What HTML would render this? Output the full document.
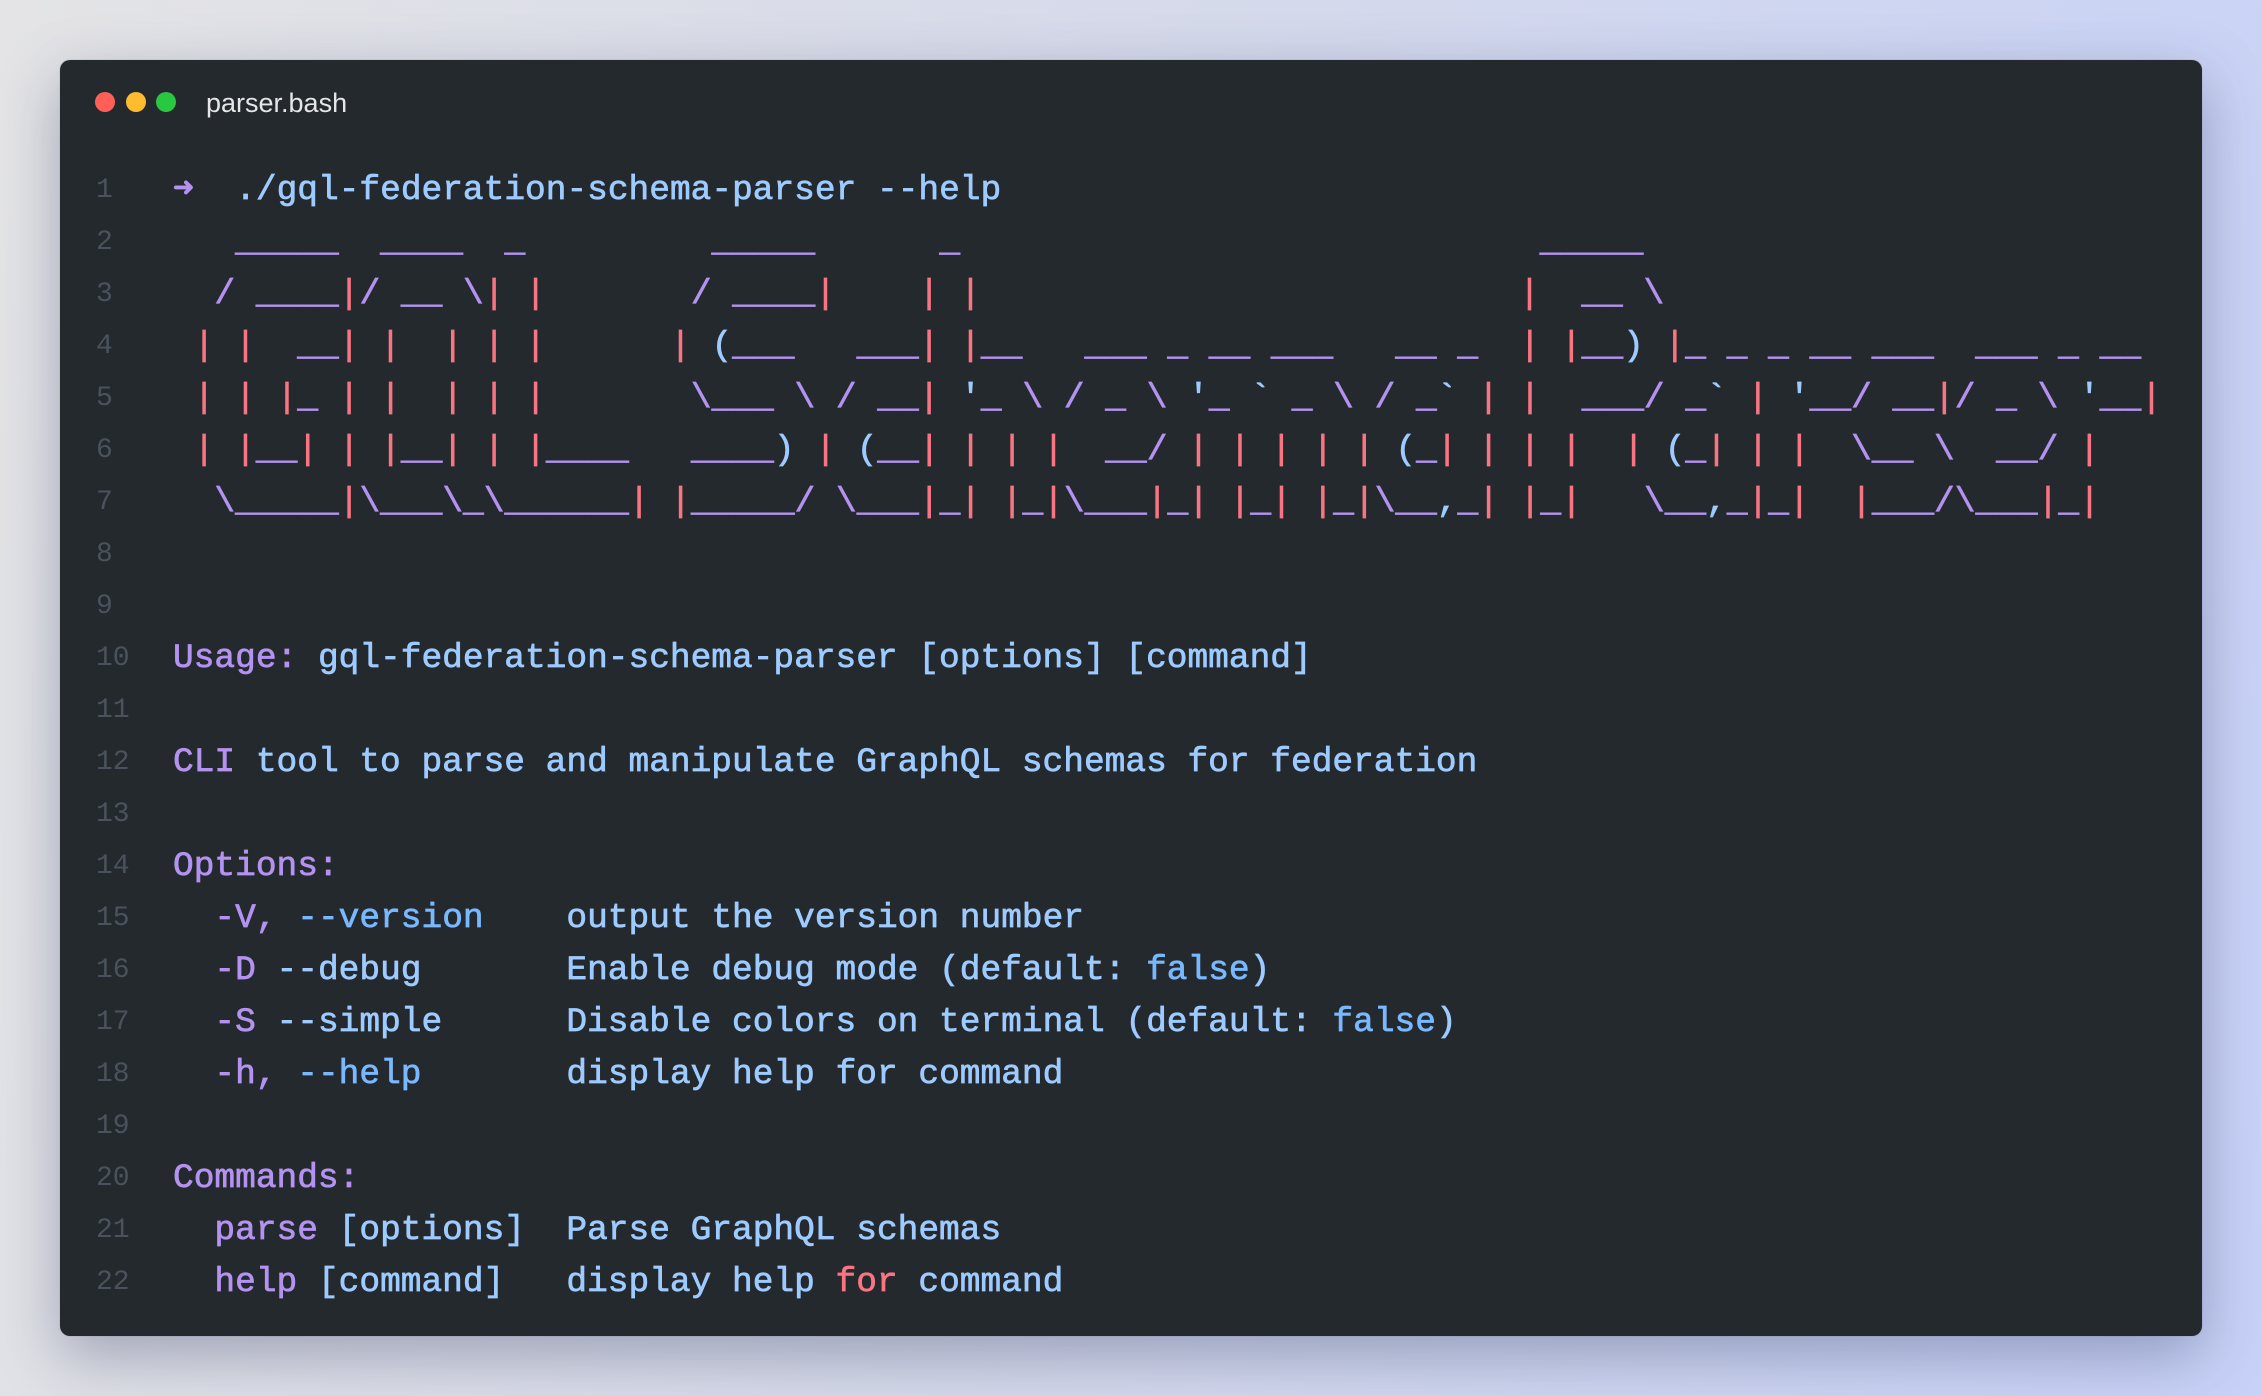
<!DOCTYPE html>
<html><head><meta charset="utf-8"><style>
html,body{margin:0;padding:0}
body{width:2262px;height:1396px;overflow:hidden;position:relative;
background:linear-gradient(100deg,#e4e4e6 0%,#d6daea 45%,#c8d2f8 100%);}
.win{position:absolute;left:60px;top:60px;width:2142px;height:1276px;background:#24292e;border-radius:10px;
box-shadow:0 20px 60px rgba(40,50,90,0.35),0 0 0 1px rgba(0,0,0,0.05);}
.dot{position:absolute;top:92px;width:20px;height:20px;border-radius:50%}
.title{position:absolute;left:206px;top:88px;font-family:"Liberation Sans",sans-serif;font-size:27px;color:#e6e6e6;}
.ln{position:absolute;left:96px;width:60px;font-family:"Liberation Mono",monospace;font-size:28px;color:#4a535d;line-height:52px;}
.tx{position:absolute;left:173px;font-family:"Liberation Mono",monospace;font-size:34.5px;line-height:52px;white-space:pre;color:#9ecbff;-webkit-text-stroke:0.7px currentColor;}
.p{color:#b392f0}.b{color:#9ecbff}.r{color:#f97583}.f{color:#79b8ff}.w{color:#e1e4e8}
</style></head><body>
<div class="win"></div>
<div class="dot" style="left:95px;background:#ff5f57"></div>
<div class="dot" style="left:126px;background:#febc2e"></div>
<div class="dot" style="left:156px;background:#28c840"></div>
<div class="title">parser.bash</div>
<div id="c" style="position:absolute;left:0;top:165px;width:2262px;height:1200px">
<div class="ln" style="top:0">1</div><div class="tx" style="top:0"><span class="p">➜</span>  ./gql-federation-schema-parser --help</div>
<div class="ln" style="top:52px">2</div><div class="tx art" style="top:52px">   _____  ____  _         _____      _                            _____</div>
<div class="ln" style="top:104px">3</div><div class="tx art" style="top:104px">  / ____|/ __ \| |       / ____|    | |                          |  __ \</div>
<div class="ln" style="top:156px">4</div><div class="tx art" style="top:156px"> | |  __| |  | | |      | (___   ___| |__   ___ _ __ ___   __ _  | |__) |_ _ _ __ ___  ___ _ __</div>
<div class="ln" style="top:208px">5</div><div class="tx art" style="top:208px"> | | |_ | |  | | |       \___ \ / __| '_ \ / _ \ '_ ` _ \ / _` | |  ___/ _` | '__/ __|/ _ \ '__|</div>
<div class="ln" style="top:260px">6</div><div class="tx art" style="top:260px"> | |__| | |__| | |____   ____) | (__| | | |  __/ | | | | | (_| | | |  | (_| | |  \__ \  __/ |</div>
<div class="ln" style="top:312px">7</div><div class="tx art" style="top:312px">  \_____|\___\_\______| |_____/ \___|_| |_|\___|_| |_| |_|\__,_| |_|   \__,_|_|  |___/\___|_|</div>
<div class="ln" style="top:364px">8</div>
<div class="ln" style="top:416px">9</div>
<div class="ln" style="top:468px">10</div><div class="tx" style="top:468px"><span class="p">Usage:</span> gql-federation-schema-parser [options] [command]</div>
<div class="ln" style="top:520px">11</div>
<div class="ln" style="top:572px">12</div><div class="tx" style="top:572px"><span class="p">CLI</span> tool to parse and manipulate GraphQL schemas for federation</div>
<div class="ln" style="top:624px">13</div>
<div class="ln" style="top:676px">14</div><div class="tx" style="top:676px"><span class="p">Options:</span></div>
<div class="ln" style="top:728px">15</div><div class="tx" style="top:728px">  <span class="p">-V,</span> <span class="f">--version</span>    output the version number</div>
<div class="ln" style="top:780px">16</div><div class="tx" style="top:780px">  <span class="p">-D</span> --debug       Enable debug mode (default: <span class="f">false</span>)</div>
<div class="ln" style="top:832px">17</div><div class="tx" style="top:832px">  <span class="p">-S</span> --simple      Disable colors on terminal (default: <span class="f">false</span>)</div>
<div class="ln" style="top:884px">18</div><div class="tx" style="top:884px">  <span class="p">-h,</span> <span class="f">--help</span>       display help for command</div>
<div class="ln" style="top:936px">19</div>
<div class="ln" style="top:988px">20</div><div class="tx" style="top:988px"><span class="p">Commands:</span></div>
<div class="ln" style="top:1040px">21</div><div class="tx" style="top:1040px">  <span class="p">parse</span> [options]  Parse GraphQL schemas</div>
<div class="ln" style="top:1092px">22</div><div class="tx" style="top:1092px">  <span class="p">help</span> [command]   display help <span class="r">for</span> command</div>
</div>
<script>
document.querySelectorAll('.art').forEach(function(el){
  var t=el.textContent,h='';
  for(var i=0;i<t.length;i++){var c=t[i];
    var cls= c==='|'?'r': c==='_'?'p': (c==='/'||c==='\\')?'p':'b';
    if(c===' '){h+=' ';continue;}
    h+='<span class="'+cls+'">'+(c==='<'?'&lt;':c)+'</span>';}
  el.innerHTML=h;
});
</script>
</body></html>
